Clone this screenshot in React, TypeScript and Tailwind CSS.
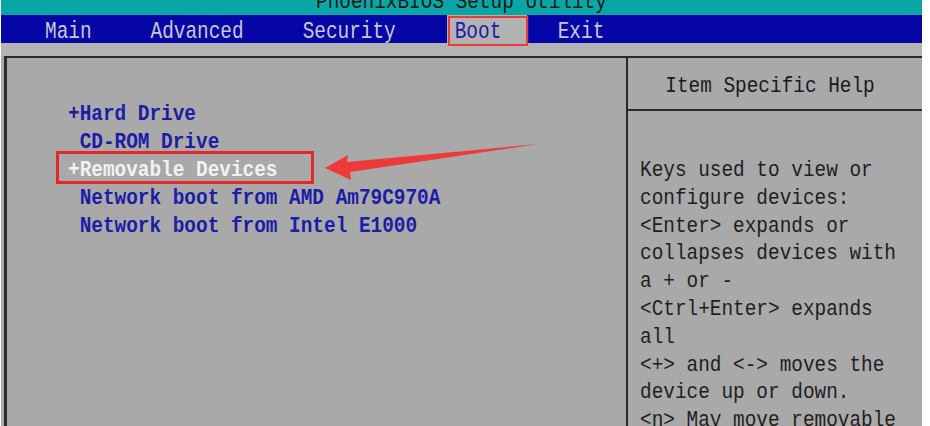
import React from "react";

const help = [
  "Keys used to view or",
  "configure devices:",
  "<Enter> expands or",
  "collapses devices with",
  "a + or -",
  "<Ctrl+Enter> expands",
  "all",
  "<+> and <-> moves the",
  "device up or down.",
  "<n> May move removable",
];

const items = [
  { t: "+Hard Drive", c: "text-[#1c1ca6]" },
  { t: " CD-ROM Drive", c: "text-[#1c1ca6]" },
  { t: "+Removable Devices", c: "text-[#f2f2f2]" },
  { t: " Network boot from AMD Am79C970A", c: "text-[#1c1ca6]" },
  { t: " Network boot from Intel E1000", c: "text-[#1c1ca6]" },
];

export default function App() {
  return (
    <div className="w-[930px] h-[426px] bg-white overflow-hidden font-['Liberation_Mono','DejaVu_Sans_Mono',monospace] text-[19.4px]">
      <div className="w-[921px] h-[426px] ml-px flex flex-col bg-[#a9a9a9]">
        {/* title bar */}
        <div className="h-[15px] bg-[#0aa6a6] relative overflow-hidden shrink-0">
          <div className="absolute left-0 right-0 top-[-10px] text-center leading-[24px] text-[#1a1a1a] scale-y-[1.15]">
            PhoenixBIOS Setup Utility
          </div>
        </div>
        {/* tab bar */}
        <div className="h-[28px] bg-[#0606a6] flex items-start text-[#c9c9cf] shrink-0 relative">
          <span className="ml-[44px] mt-[3px] inline-block scale-y-[1.2] leading-[28px]">Main</span>
          <span className="ml-[59px] mt-[3px] inline-block scale-y-[1.2] leading-[28px]">Advanced</span>
          <span className="ml-[59px] mt-[3px] inline-block scale-y-[1.2] leading-[28px]">Security</span>
          <span className="ml-[51px] relative h-[28px] w-[82px] bg-[#b2b2b2] text-[#1c1ca6] flex items-start pl-[8px] border-r-2 border-[#1c1ca6]">
            <span className="mt-[3px] inline-block scale-y-[1.2] leading-[28px]">Boot</span>
            <span className="absolute left-[1px] top-[1px] w-[80px] h-[30px] border-2 border-[#ea3b3b]" />
          </span>
          <span className="ml-[29px] mt-[3px] inline-block scale-y-[1.2] leading-[28px]">Exit</span>
        </div>
        {/* gray strip */}
        <div className="h-[13px] bg-[#b3b3b3] shrink-0" />
        {/* main frame */}
        <div className="flex-1 flex ml-[3px] border-t-2 border-l-[3px] border-[#2a2a2a] bg-[#a9a9a9]">
          <div className="w-[619px] relative pt-[42px] pl-[61px]">
            {items.map((it, i) => (
              <div key={i} className={`h-[28px] leading-[28px] whitespace-pre font-bold ${it.c}`}>
                <span className="inline-block scale-y-[1.15]">{it.t}</span>
              </div>
            ))}
            <div className="absolute left-[49px] top-[93px] w-[258px] h-[33px] border-[3px] border-[#e8262a]" />
            <svg className="absolute left-[300px] top-[80px]" width="240" height="60" viewBox="300 80 240 60">
              <polygon points="318,110 341,97 340,104 531,86 343,114 344,122" fill="#ef3a3a" />
            </svg>
          </div>
          <div className="flex-1 border-l-2 border-[#2a2a2a] flex flex-col">
            <div className="h-[53px] border-b-2 border-[#2a2a2a] flex items-center justify-center text-[#1a1a1a] pr-[10px] pt-[7px]">
              <span className="inline-block scale-y-[1.15]">Item Specific Help</span>
            </div>
            <div className="pt-[46px] pl-[12px] text-[#1e1e1e]">
              {help.map((l, i) => (
                <div key={i} className="h-[27.8px] leading-[27.8px] whitespace-pre">
                  <span className="inline-block scale-y-[1.15]">{l}</span>
                </div>
              ))}
            </div>
          </div>
        </div>
      </div>
    </div>
  );
}
